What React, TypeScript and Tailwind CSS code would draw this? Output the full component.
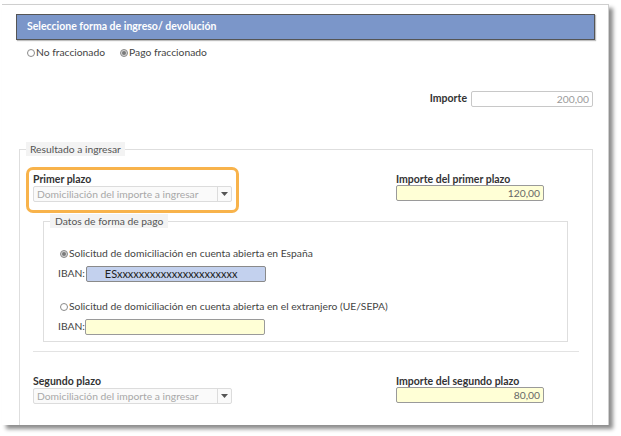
import React from "react";

const F = "font-['Lato','Open_Sans',sans-serif]";

function Radio({ checked }: { checked?: boolean }) {
  return (
    <span
      className={`inline-flex items-center justify-center w-[8px] h-[8px] rounded-full border border-[#8a8a8a] ${
        checked ? "bg-[#d6d6d6]" : "bg-white"
      }`}
    >
      {checked && <span className="block w-[4px] h-[4px] rounded-full bg-[#7a7a7a]" />}
    </span>
  );
}

function Select() {
  return (
    <div className="flex w-[199px] h-[16px] border border-[#dcdcdc] bg-[#fafafa] rounded-[2px]">
      <div className="flex-1 pl-[3px] text-[10.3px] leading-[14px] text-[#a8a8a8]">
        Domiciliación del importe a ingresar
      </div>
      <div className="w-[14px] border-l border-[#dcdcdc] flex items-center justify-center">
        <svg width="7" height="4" viewBox="0 0 7 4">
          <path d="M0 0 L7 0 L3.5 4 Z" fill="#555" />
        </svg>
      </div>
    </div>
  );
}

function Amount({ value }: { value: string }) {
  return (
    <div className="w-[148px] h-[16px] border border-[#9a9a9a] bg-[#ffffd6] rounded-[2px] text-right pr-[3px] text-[10.3px] leading-[14px] text-[#666]">
      {value}
    </div>
  );
}

export default function App() {
  return (
    <div className={`w-[621px] h-[436px] bg-white pt-[4px] pl-[2px] ${F}`}>
      <div className="w-[607px] h-[421px] bg-white border-t border-r border-[#cfcfcf] overflow-hidden shadow-[4px_4px_4px_rgba(0,0,0,0.45)]">
        <div className="pl-[14px] w-[593px]">
          {/* Header */}
          <div className="mt-[9px] w-[579px] h-[26px] bg-[#7b96c9] border border-[#555] shadow-[1px_1px_1px_rgba(0,0,0,0.25)] flex items-center pl-[10px]">
            <span className="text-white font-bold text-[10.5px]">Seleccione forma de ingreso/ devolución</span>
          </div>

          {/* Radios */}
          <div className="mt-[6px] h-[14px] pl-[11px] flex items-center text-[10.3px] text-[#444]">
            <Radio />
            <span className="ml-[1px]">No fraccionado</span>
            <span className="ml-[15px]" />
            <Radio checked />
            <span className="ml-[1px]">Pago fraccionado</span>
          </div>

          {/* Importe */}
          <div className="mt-[31px] pr-[2px] flex justify-end items-center">
            <span className="text-[10.5px] font-bold text-[#333] mr-[4px]">Importe</span>
            <div className="w-[122px] h-[16px] border border-[#c8c8c8] rounded-[2px] text-right pr-[3px] text-[10.3px] leading-[14px] text-[#999]">
              200,00
            </div>
          </div>

          {/* Outer fieldset */}
          <fieldset className="mt-[35px] ml-[3px] w-[574px] h-[300px] border border-[#dedede] pl-[13px]">
            <legend className="ml-[-7px] px-[4px] bg-[#f3f3f3] text-[10.3px] leading-[14px] text-[#555]">
              Resultado a ingresar
            </legend>

            {/* Row 1 */}
            <div className="mt-[17px] flex">
              <div className="relative w-[200px]">
                <div className="absolute left-[-7px] top-[-6px] right-[-6px] bottom-[-11px] border-[3px] border-[#f8b34b] rounded-[7px] pointer-events-none" />
                <div className="text-[10.5px] leading-[12px] font-bold text-[#333]">Primer plazo</div>
                <div className="mt-[1px]">
                  <Select />
                </div>
              </div>
              <div className="ml-[163px]">
                <div className="text-[10.5px] leading-[12px] font-bold text-[#333]">Importe del primer plazo</div>
                <Amount value="120,00" />
              </div>
            </div>

            {/* Inner fieldset */}
            <fieldset className="mt-[12px] ml-[10px] w-[525px] h-[128px] border border-[#dedede] pl-[14px]">
              <legend className="ml-[-8px] px-[5px] bg-[#f3f3f3] text-[10.3px] leading-[14px] text-[#555]">
                Datos de forma de pago
              </legend>
              <div className="mt-[19px] h-[14px] pl-[2px] flex items-center text-[10.3px] text-[#444]">
                <Radio checked />
                <span className="ml-[1px]">Solicitud de domiciliación en cuenta abierta en España</span>
              </div>
              <div className="mt-[5px] flex items-center text-[10.3px] text-[#444]">
                <span className="mr-[1px]">IBAN:</span>
                <div className="w-[180px] h-[16px] border border-[#8a8a8a] bg-[#c3d1ee] rounded-[2px] pl-[18px] text-[11px] leading-[14px] text-[#222]">
                  ESxxxxxxxxxxxxxxxxxxxxxx
                </div>
              </div>
              <div className="mt-[18px] h-[14px] pl-[2px] flex items-center text-[10.3px] text-[#444]">
                <Radio />
                <span className="ml-[1px]">Solicitud de domiciliación en cuenta abierta en el extranjero (UE/SEPA)</span>
              </div>
              <div className="mt-[5px] flex items-center text-[10.3px] text-[#444]">
                <span>IBAN:</span>
                <div className="w-[180px] h-[16px] border border-[#9a9a9a] bg-[#ffffd6] rounded-[2px]" />
              </div>
            </fieldset>

            <div className="mt-[9px] w-[546px] h-px bg-[#e3e3e3]" />

            {/* Row 2 */}
            <div className="mt-[23px] flex">
              <div className="w-[200px]">
                <div className="text-[10.5px] leading-[12px] font-bold text-[#333]">Segundo plazo</div>
                <div className="mt-[1px]">
                  <Select />
                </div>
              </div>
              <div className="ml-[163px]">
                <div className="text-[10.5px] leading-[12px] font-bold text-[#333]">Importe del segundo plazo</div>
                <Amount value="80,00" />
              </div>
            </div>
          </fieldset>
        </div>
      </div>
    </div>
  );
}
